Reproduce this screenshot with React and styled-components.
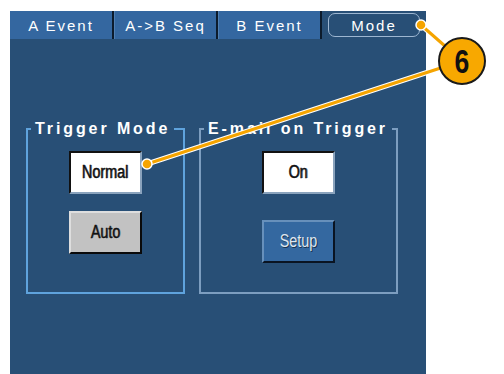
import React from "react";
import styled, { createGlobalStyle } from "styled-components";

const Global = createGlobalStyle`
  html, body { margin: 0; padding: 0; background: #ffffff; }
  body { width: 504px; height: 374px; overflow: hidden; font-family: "Liberation Sans", Arial, sans-serif; }
`;

const Page = styled.div`
  position: relative;
  width: 504px;
  height: 374px;
  padding: 11px 0 0 10px;
  box-sizing: border-box;
`;

const Panel = styled.div`
  width: 416px;
  height: 363px;
  background: #284f76;
  display: flex;
  flex-direction: column;
`;

const TabBar = styled.div`
  display: flex;
  height: 28px;
  background: #3467a0;
`;

const Tab = styled.div`
  width: 104px;
  box-sizing: border-box;
  display: flex;
  align-items: center;
  justify-content: center;
  color: #ffffff;
  font-size: 15px;
  letter-spacing: 2px;
  border-right: 2px solid #0c1b2c;
  border-left: 1px solid #4f7fb2;
  &:first-child { border-left: none; }
`;

const ActiveTab = styled.div`
  flex: 1;
  background: #284f76;
  display: flex;
  align-items: center;
  padding: 2px 6px 2px 6px;
  box-sizing: border-box;
`;

const ActiveLabel = styled.div`
  flex: 1;
  height: 100%;
  border: 1.5px solid #9db6d1;
  border-radius: 7px;
  box-sizing: border-box;
  display: flex;
  align-items: center;
  justify-content: center;
  color: #ffffff;
  font-size: 15px;
  letter-spacing: 2px;
`;

const Groups = styled.div`
  display: flex;
  gap: 14px;
  padding: 81px 0 0 16px;
`;

const Group = styled.fieldset`
  margin: 0;
  width: ${(p) => p.$w}px;
  height: 174px;
  box-sizing: border-box;
  border: ${(p) => (p.$bright ? "2px solid #5fa3dd" : "2px solid #7d9ec0")};
  padding: 13px 0 0 0;
  display: flex;
  flex-direction: column;
  align-items: center;
  gap: ${(p) => p.$gap}px;
`;

const Legend = styled.legend`
  margin-left: 3px;
  padding: 0 4px;
  color: #ffffff;
  font-weight: bold;
  font-size: 16px;
  line-height: 18px;
  letter-spacing: 2.9px;
`;

const Button = styled.div`
  width: 73px;
  height: 43px;
  box-sizing: border-box;
  display: flex;
  align-items: center;
  justify-content: center;
  ${(p) =>
    p.$kind === "selected"
      ? `
    background: #ffffff;
    color: #111111;
    border-top: 2px solid #111111;
    border-left: 2px solid #111111;
    border-right: 2px solid #8aa3bd;
    border-bottom: 2px solid #8aa3bd;
  `
      : p.$kind === "gray"
      ? `
    background: #c2c2c2;
    color: #111111;
    border-top: 2px solid #dedede;
    border-left: 2px solid #dedede;
    border-right: 2px solid #0a0a0a;
    border-bottom: 2px solid #0a0a0a;
  `
      : `
    background: #3468a0;
    color: #dfe6ee;
    border-top: 2px solid #6790bb;
    border-left: 2px solid #6790bb;
    border-right: 2px solid #0a1422;
    border-bottom: 2px solid #0a1422;
  `}
`;

const ButtonLabel = styled.span`
  display: inline-block;
  font-family: "Liberation Sans", Arial, sans-serif;
  font-size: 18px;
  transform: scaleX(0.8);
  -webkit-text-stroke: ${(p) => (p.$light ? "0" : "0.3px")};
  text-shadow: ${(p) => (p.$light ? "1px 1px 0 #1a3350" : "1px 0 0 #777")};
`;

const Overlay = styled.svg`
  position: absolute;
  left: 0;
  top: 0;
  width: 504px;
  height: 374px;
  pointer-events: none;
`;

const CalloutNumber = styled.text`
  font-family: "Liberation Sans", Arial, sans-serif;
  font-weight: bold;
  font-size: 34px;
  fill: #111111;
`;

function Callout() {
  const cx = 462;
  const cy = 61;
  return (
    <Overlay viewBox="0 0 504 374">
      <g strokeLinecap="round">
        <line x1="421" y1="25" x2={cx} y2={cy} stroke="#ffffff" strokeWidth="5" />
        <line x1="147" y1="164" x2={cx} y2={cy} stroke="#ffffff" strokeWidth="5" />
        <line x1="421" y1="25" x2={cx} y2={cy} stroke="#f5a400" strokeWidth="3" />
        <line x1="147" y1="164" x2={cx} y2={cy} stroke="#f5a400" strokeWidth="3" />
      </g>
      <circle cx="421" cy="25" r="5" fill="#f5a400" stroke="#ffffff" strokeWidth="1.5" />
      <circle cx="147" cy="164" r="5" fill="#f5a400" stroke="#ffffff" strokeWidth="1.5" />
      <circle cx={cx} cy={cy} r="23" fill="#f8a800" stroke="#1a1a1a" strokeWidth="2" />
      <CalloutNumber
        x={cx}
        y={cy + 12}
        textAnchor="middle"
        transform={`translate(${cx} 0) scale(0.78 1) translate(${-cx} 0)`}
      >
        6
      </CalloutNumber>
    </Overlay>
  );
}

export default function App() {
  return (
    <Page>
      <Global />
      <Panel>
        <TabBar>
          <Tab>A Event</Tab>
          <Tab>A-&gt;B Seq</Tab>
          <Tab>B Event</Tab>
          <ActiveTab>
            <ActiveLabel>Mode</ActiveLabel>
          </ActiveTab>
        </TabBar>
        <Groups>
          <Group $w={159} $gap={17} $bright>
            <Legend>Trigger Mode</Legend>
            <Button $kind="selected"><ButtonLabel>Normal</ButtonLabel></Button>
            <Button $kind="gray"><ButtonLabel>Auto</ButtonLabel></Button>
          </Group>
          <Group $w={199} $gap={26}>
            <Legend>E-mail on Trigger</Legend>
            <Button $kind="selected"><ButtonLabel>On</ButtonLabel></Button>
            <Button $kind="blue"><ButtonLabel $light>Setup</ButtonLabel></Button>
          </Group>
        </Groups>
      </Panel>
      <Callout />
    </Page>
  );
}
